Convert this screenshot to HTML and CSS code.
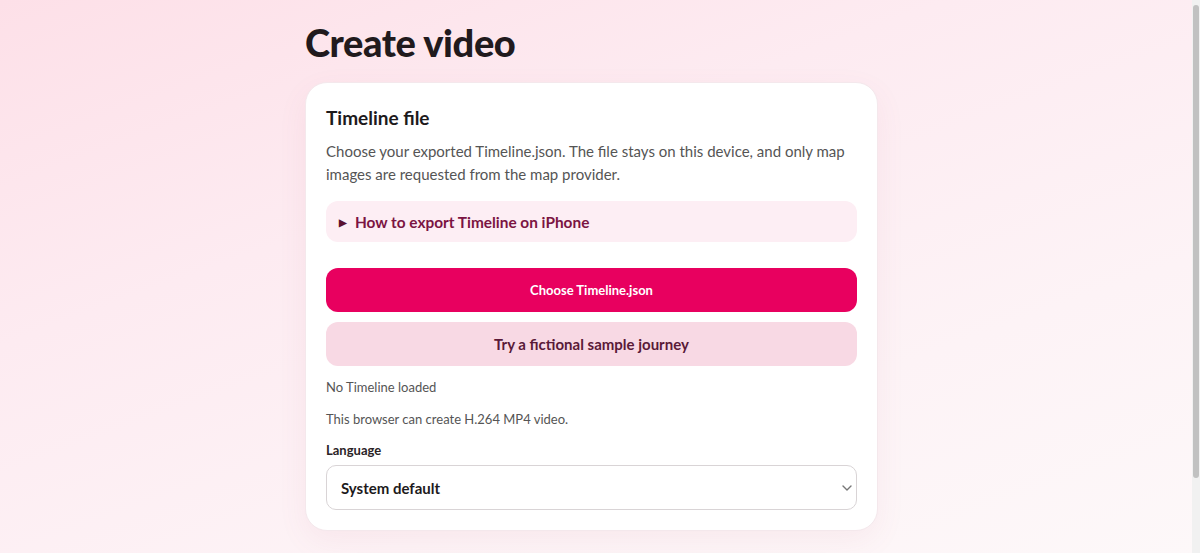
FILE: index.html
```html
<!DOCTYPE html>
<html lang="en">
<head>
<meta charset="utf-8">
<title>Create video</title>
<link rel="stylesheet" href="styles.css">
</head>
<body>
<main class="page">
  <h1 class="title">Create video</h1>
  <section class="card">
    <h2 class="card-title">Timeline file</h2>
    <p class="lead">Choose your exported Timeline.json. The file stays on this device, and only map images are requested from the map provider.</p>
    <details class="help">
      <summary class="help-summary"><span class="tri">&#9654;</span>How to export Timeline on iPhone</summary>
    </details>
    <div class="actions">
      <button class="btn btn-primary" type="button">Choose Timeline.json</button>
      <button class="btn btn-secondary" type="button">Try a fictional sample journey</button>
    </div>
    <p class="status">No Timeline loaded</p>
    <p class="status">This browser can create H.264 MP4 video.</p>
    <label class="field-label" for="lang">Language</label>
    <div class="select-wrap">
      <select id="lang" class="select">
        <option>System default</option>
      </select>
      <svg class="chev" width="10" height="6" viewBox="0 0 10 6"><path d="M1 1l4 4 4-4" fill="none" stroke="#777" stroke-width="1.4" stroke-linecap="round" stroke-linejoin="round"/></svg>
    </div>
  </section>
</main>
<div class="scrollbar"><div class="thumb"></div></div>
</body>
</html>
```

FILE: styles.css
```css
* { box-sizing: border-box; }
html, body { height: 100%; }
body {
  margin: 0;
  overflow: hidden;
  font-family: "Segoe UI", "Lato", "Noto Sans", sans-serif;
  color: #1d1a1c;
  background: linear-gradient(160deg, #fde0e8 0%, #fdebf1 35%, #fdf3f6 70%, #fdf8f9 100%);
}
.page {
  width: 582px;
  margin: 0 auto;
  padding: 20px 0 0;
  position: relative;
  left: -4px;
}
.title {
  margin: 0 0 18px;
  font-size: 38px;
  line-height: 44px;
  font-weight: 900;
  letter-spacing: -0.4px;
  color: #211a1d;
}
.card {
  width: 573px;
  background: #fff;
  border: 1px solid #f4e8ec;
  border-radius: 22px;
  padding: 22px 20px 20px;
  box-shadow: 0 10px 30px rgba(190, 80, 120, 0.07);
}
.card-title {
  margin: 0 0 9px;
  font-size: 19px;
  line-height: 26px;
  font-weight: 700;
  color: #1d1a1c;
}
.lead {
  margin: 0 0 16px;
  font-size: 15px;
  line-height: 22.5px;
  color: #555;
}
.help {
  background: #fdeef4;
  border-radius: 12px;
  margin: 0 0 26px;
}
.help-summary {
  list-style: none;
  display: flex;
  align-items: center;
  height: 41px;
  padding: 0 13px;
  font-size: 15.4px;
  font-weight: 700;
  color: #7b1442;
  cursor: pointer;
}
.help-summary::-webkit-details-marker { display: none; }
.tri {
  font-size: 10px;
  margin-right: 8px;
  color: #5a1030;
}
.actions {
  display: flex;
  flex-direction: column;
  gap: 10px;
  margin-bottom: 12px;
}
.btn {
  height: 44px;
  border: 0;
  border-radius: 12px;
  font-family: inherit;
  font-weight: 700;
  cursor: pointer;
}
.btn-primary {
  background: #e8005f;
  color: #fff;
  font-size: 13px;
}
.btn-secondary {
  background: #f8d9e4;
  color: #5a1a38;
  font-size: 15px;
}
.status {
  margin: 0 0 14px;
  font-size: 13px;
  line-height: 18px;
  color: #555;
}
.field-label {
  display: block;
  margin: 0 0 7px;
  font-size: 13px;
  font-weight: 700;
  color: #2a2326;
}
.select-wrap {
  position: relative;
}
.select {
  width: 100%;
  height: 45px;
  appearance: none;
  -webkit-appearance: none;
  background: #fff;
  border: 1px solid #d9d4d6;
  border-radius: 10px;
  padding: 0 14px;
  font-family: inherit;
  font-size: 15px;
  font-weight: 700;
  color: #1d1a1c;
}
.chev {
  position: absolute;
  right: 5px;
  top: 20px;
  pointer-events: none;
}
.scrollbar {
  position: fixed;
  top: 0;
  right: 0;
  width: 8px;
  height: 100%;
  background: #f1f1f1;
}
.thumb {
  margin: 5px 1px 0;
  height: 473px;
  border-radius: 3px;
  background: #c1c1c1;
}
```
